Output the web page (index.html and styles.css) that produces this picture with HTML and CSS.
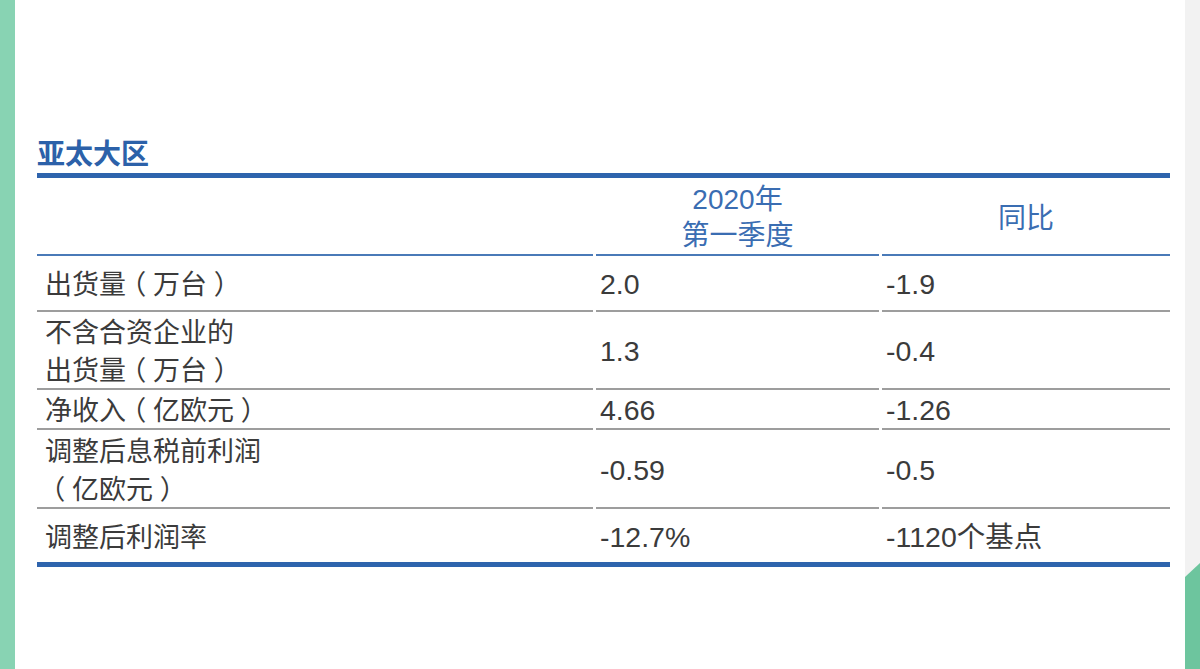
FILE: index.html
```html
<!DOCTYPE html>
<html lang="zh-CN">
<head>
<meta charset="utf-8">
<title>亚太大区</title>
<link rel="stylesheet" href="styles.css">
</head>
<body>
<div class="strip-left"></div>
<main class="page">
  <h1 class="title">亚太大区</h1>
  <div class="table">
    <div class="cell head"></div>
    <div class="cell head head-text head-top"><span class="txt">2020年<br>第一季度</span></div>
    <div class="cell head head-text head-mid">同比</div>

    <div class="cell label"><span class="txt">出货量<span class="paren">（</span>万台<span class="paren">）</span></span></div>
    <div class="cell value">2.0</div>
    <div class="cell value">-1.9</div>

    <div class="cell label"><span class="txt">不含合资企业的<br>出货量<span class="paren">（</span>万台<span class="paren">）</span></span></div>
    <div class="cell value">1.3</div>
    <div class="cell value">-0.4</div>

    <div class="cell label"><span class="txt">净收入<span class="paren">（</span>亿欧元<span class="paren">）</span></span></div>
    <div class="cell value">4.66</div>
    <div class="cell value">-1.26</div>

    <div class="cell label"><span class="txt">调整后息税前利润<br><span class="paren">（</span>亿欧元<span class="paren">）</span></span></div>
    <div class="cell value">-0.59</div>
    <div class="cell value">-0.5</div>

    <div class="cell label last"><span class="txt">调整后利润率</span></div>
    <div class="cell value last">-12.7%</div>
    <div class="cell value last">-1120个基点</div>
  </div>
</main>
<div class="strip-right"><div class="corner"></div></div>
</body>
</html>
```

FILE: styles.css
```css
html, body {
  margin: 0;
  padding: 0;
}
body {
  width: 1200px;
  height: 669px;
  overflow: hidden;
  display: flex;
  background: #ffffff;
  font-family: "Liberation Sans", "Noto Sans CJK SC", sans-serif;
}
.strip-left {
  width: 15px;
  flex: none;
  background: #88d3b3;
}
.strip-right {
  width: 15px;
  flex: none;
  background: #f2f2f2;
  position: relative;
}
.corner {
  position: absolute;
  left: 0;
  right: 0;
  bottom: 0;
  height: 106px;
  background: #6dc59e;
  clip-path: polygon(0 14px, 100% 0, 100% 100%, 0 100%);
}
.page {
  flex: 1;
  padding: 138px 0 0 22px;
  box-sizing: border-box;
}
.title {
  margin: 0 0 7px 0;
  font-family: "Noto Sans CJK SC", sans-serif;
  font-size: 28px;
  line-height: 28px;
  font-weight: 700;
  color: #2c61a9;
}
.table {
  width: 1133px;
  display: grid;
  grid-template-columns: 556px 283px 288px;
  grid-template-rows: 78px 56px 78px 40px 79px 53px;
  column-gap: 3px;
  border-top: 5px solid #2e64ad;
  border-bottom: 5px solid #2e64ad;
}
.cell {
  display: flex;
  align-items: center;
  box-sizing: border-box;
  border-bottom: 2px solid #9d9d9d;
  font-size: 27px;
  line-height: 38px;
  color: #3b3b3b;
  padding-top: 2px;
}
.cell.last {
  border-bottom: none;
}
.txt {
  display: block;
}
.head {
  border-bottom: 2px solid #4a7ab8;
  padding-top: 0;
}
.head-text {
  justify-content: center;
  text-align: center;
  font-size: 28px;
  line-height: 36px;
  color: #3a6db2;
}
.head-top {
  align-items: flex-start;
  padding-top: 4px;
}
.head-mid {
  padding-top: 6px;
}
.label {
  padding-left: 8px;
  padding-top: 4px;
}
.paren {
  font-feature-settings: "halt";
  margin: 0 0.25em;
}
.value {
  padding-left: 4px;
  font-size: 28.5px;
}
```
